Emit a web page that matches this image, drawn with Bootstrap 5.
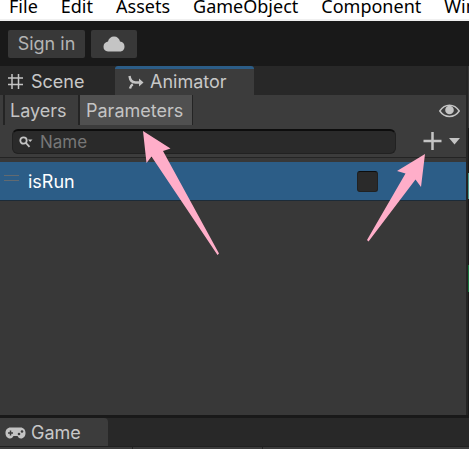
<!DOCTYPE html>
<html lang="en">
<head>
<meta charset="utf-8">
<meta name="viewport" content="width=device-width, initial-scale=1">
<title>Animator</title>
<link href="https://cdn.jsdelivr.net/npm/bootstrap@5.3.0/dist/css/bootstrap.min.css" rel="stylesheet">
<style>
body{background:#383838;color:#c8c8c8;font:18px/24px Inter,"Liberation Sans",sans-serif;overflow:hidden}
svg{display:block;flex:none}
button{font:inherit;color:inherit;border:0;padding:0;background:none}
.menubar{height:21px;background:#fff;border-bottom:2px solid #f0f0f0;padding:0 0 1px 9px;gap:23px;overflow:hidden;font-family:"Noto Sans","Open Sans",sans-serif}
.menubar a{color:#000;text-decoration:none;white-space:nowrap}
.account{height:45px;background:#191919;padding:0 8px;gap:6px}
.account .tool{height:28px;background:#383838;border-radius:2px;color:#b4b4b4}
.signin{width:77px}.cloud{width:46px}
.dock{height:29px;background:#282828}
.dock-tab{height:29px;gap:7px;padding:2px 7px 0;width:115px}
.dock-tab.current{background:#3c3c3c;width:139px;padding:0 13px;gap:6px;border-top:3px solid #2c5d87;border-radius:3px 3px 0 0}
.pane{border-right:2px solid #242424;min-width:0}
.views{height:31px;background:#3c3c3c;padding:0 6px 0 3px}
.views .view{height:30px;border-left:2px solid #242424;color:#c4c4c4;text-align:left;padding:2px 0 0 5px}
.view-layers{width:75px}
.views .view-params{width:115px;background:#505050;border-right:1px solid #242424;padding-left:6px}
.filter{height:31px;background:#3c3c3c;padding:0 6px 0 12px;gap:27px}
.filter label{height:25px;background:#2a2a2a;border:1px solid #212121;border-top:2px solid #0d0d0d;border-radius:6px;padding:0 6px 1px;gap:7px}
.filter input{background:none;border:0;outline:0;padding:0;color:#ccc;min-width:0;font-size:17px;line-height:20px}
.filter input::placeholder{color:#777;opacity:1}
.filter button{padding-bottom:1px}
.params{border-top:1px solid #242424;padding-top:4px}
.param{height:39px;background:#2c5d87;border-bottom:1px solid #1c2b38;color:#fff;padding:0 88px 0 4px;gap:9px}
.param label{padding-top:2px}
.param svg{margin-bottom:6px}
.param input{appearance:none;width:21px;height:21px;background:#2a2a2a;border:1px solid #212121;border-top-color:#0d0d0d;border-radius:3px;margin:0}
.neighbour{width:1px;background:linear-gradient(#383838 62px,#191919 62px 107px,#4c988c 107px 133px,#191919 133px 199px,#16733c 199px 226px,#191919 226px)}
.workspace{height:349px}
.lower{border-top:3px solid #191919}
.lower .dock{border-bottom:1px solid #202020}
.dock-tab.game{background:#3c3c3c;width:108px;padding:2px 5px 0;gap:5px;height:28px;border-radius:0 4px 0 0}
.gamebar{height:24px;background:#3c3c3c}
.gamebar div{border-right:1px solid #242424}
.display{width:133px}.aspect{width:130px}
.pointer{top:130px;left:142px}.pointer-add{top:153px;right:43px}
</style>
<script src="https://cdn.jsdelivr.net/npm/bootstrap@5.3.0/dist/js/bootstrap.bundle.min.js"></script>
</head>
<body>
<div class="position-relative">
<nav class="menubar d-flex align-items-end">
<a href="#">File</a><a href="#">Edit</a><a href="#">Assets</a><a href="#">GameObject</a><a href="#">Component</a><a href="#">Window</a>
</nav>
<div class="account d-flex align-items-center">
<button class="tool signin">Sign in</button>
<button class="tool cloud d-flex align-items-center justify-content-center" aria-label="Cloud services"><svg width="22" height="16" viewBox="0 0 22 16" fill="#c4c4c4"><path d="M5 15.5C2 15.5.5 13.500.5 10.800.5 8 2.200 6 5 5.500 5.500 2.500 8 .5 11 .5c3.200 0 5.500 2 6 5 2.800.3 4.500 2.300 4.500 5s-1.500 5-4.500 5z"/></svg></button>
</div>
<div class="workspace d-flex">
<main class="pane flex-grow-1">
<div class="dock d-flex">
<button class="dock-tab d-flex align-items-center"><svg width="17" height="17" viewBox="0 0 17 17" stroke="#c4c4c4" stroke-width="1.500"><path d="M5 1v15M11.500 1v15M1 5h15M1 11.500h15"/></svg><span>Scene</span></button>
<button class="dock-tab current d-flex align-items-center"><svg width="16" height="15" viewBox="0 0 16 15" fill="none" stroke="#c4c4c4" stroke-width="2.400"><path d="M1.500 1c.5 4 2.500 6.500 6 6.500h5M2 13.500c.3-2 1.200-3.200 2.800-4.200"/><path d="M11 3.500l4.500 4-4.500 4z" fill="#c4c4c4" stroke="none"/></svg><span>Animator</span></button>
</div>
<div class="views d-flex">
<button class="view view-layers">Layers</button><button class="view view-params">Parameters</button>
<button class="ms-auto" aria-label="Toggle visibility"><svg width="21" height="14" viewBox="0 0 21 14"><path d="M.8 7C3.500 2.800 6.500 1.200 10.500 1.200S17.500 2.800 20.200 7c-2.700 4-5.700 5.500-9.700 5.500S3.500 11 .8 7z" fill="none" stroke="#c4c4c4" stroke-width="1.500"/><circle cx="10.500" cy="6" r="4.300" fill="#c4c4c4"/></svg></button>
</div>
<div class="filter d-flex align-items-center">
<label class="d-flex align-items-center flex-grow-1"><svg width="14" height="12" viewBox="0 0 14 12" fill="none" stroke="#c4c4c4" stroke-width="1.800"><circle cx="4.500" cy="4.500" r="3.200"/><path d="M7 7l3.500 3.800"/><path d="M9 3.500h4.500L11.200 6z" fill="#c4c4c4" stroke="none"/></svg><input class="flex-grow-1" type="text" placeholder="Name" aria-label="Parameter name"></label>
<button class="d-flex align-items-center" aria-label="Add parameter"><svg width="37" height="18" viewBox="0 0 37 18"><path d="M9.500 0v18M.5 9h18" stroke="#c4c4c4" stroke-width="2.500"/><path d="M26 6h11l-5.500 6.500z" fill="#c4c4c4"/></svg></button>
</div>
<div class="params">
<div class="param d-flex align-items-center"><svg width="15" height="6" viewBox="0 0 15 6" stroke="#626a70"><path d="M0 .5h15M0 5.500h15"/></svg><label for="isrun" class="flex-grow-1">isRun</label><input type="checkbox" id="isrun"></div>
</div>
</main>
<div class="neighbour"></div>
</div>
<section class="lower">
<div class="dock"><button class="dock-tab game d-flex align-items-center"><svg width="21" height="12" viewBox="0 0 21 12"><path d="M5.500.5h10c3 0 5 2.300 5 5.500s-2 5.500-4.500 5.500c-2 0-2.800-1.500-3.500-2.500h-4C7.800 10 7 11.500 5 11.500 2.500 11.500.5 9.200.5 6s2-5.500 5-5.500z" fill="#c4c4c4"/><path d="M5.500 3.500v5M3 6h5" stroke="#3c3c3c" stroke-width="1.500"/><circle cx="17" cy="4.500" r="1.300" fill="#3c3c3c"/><circle cx="14" cy="7" r="1.300" fill="#3c3c3c"/></svg><span>Game</span></button></div>
<div class="gamebar d-flex"><div class="display"></div><div class="aspect"></div></div>
</section>
<svg class="pointer position-absolute" width="78" height="126" viewBox="142 130 78 126" fill="#ffaec9"><path d="M143 131l27.500 17.500-7.500 2.500 56 102.500-1.500 1.500-66-98.500-5 6.500z"/></svg>
<svg class="pointer-add position-absolute" width="60" height="89" viewBox="366 153 60 89" fill="#ffaec9"><path d="M425 154l-28 17 8.500 2.500L367 240l1.500 1.500 47-62 5.500 7.500z"/></svg>
</div>
</body>
</html>
